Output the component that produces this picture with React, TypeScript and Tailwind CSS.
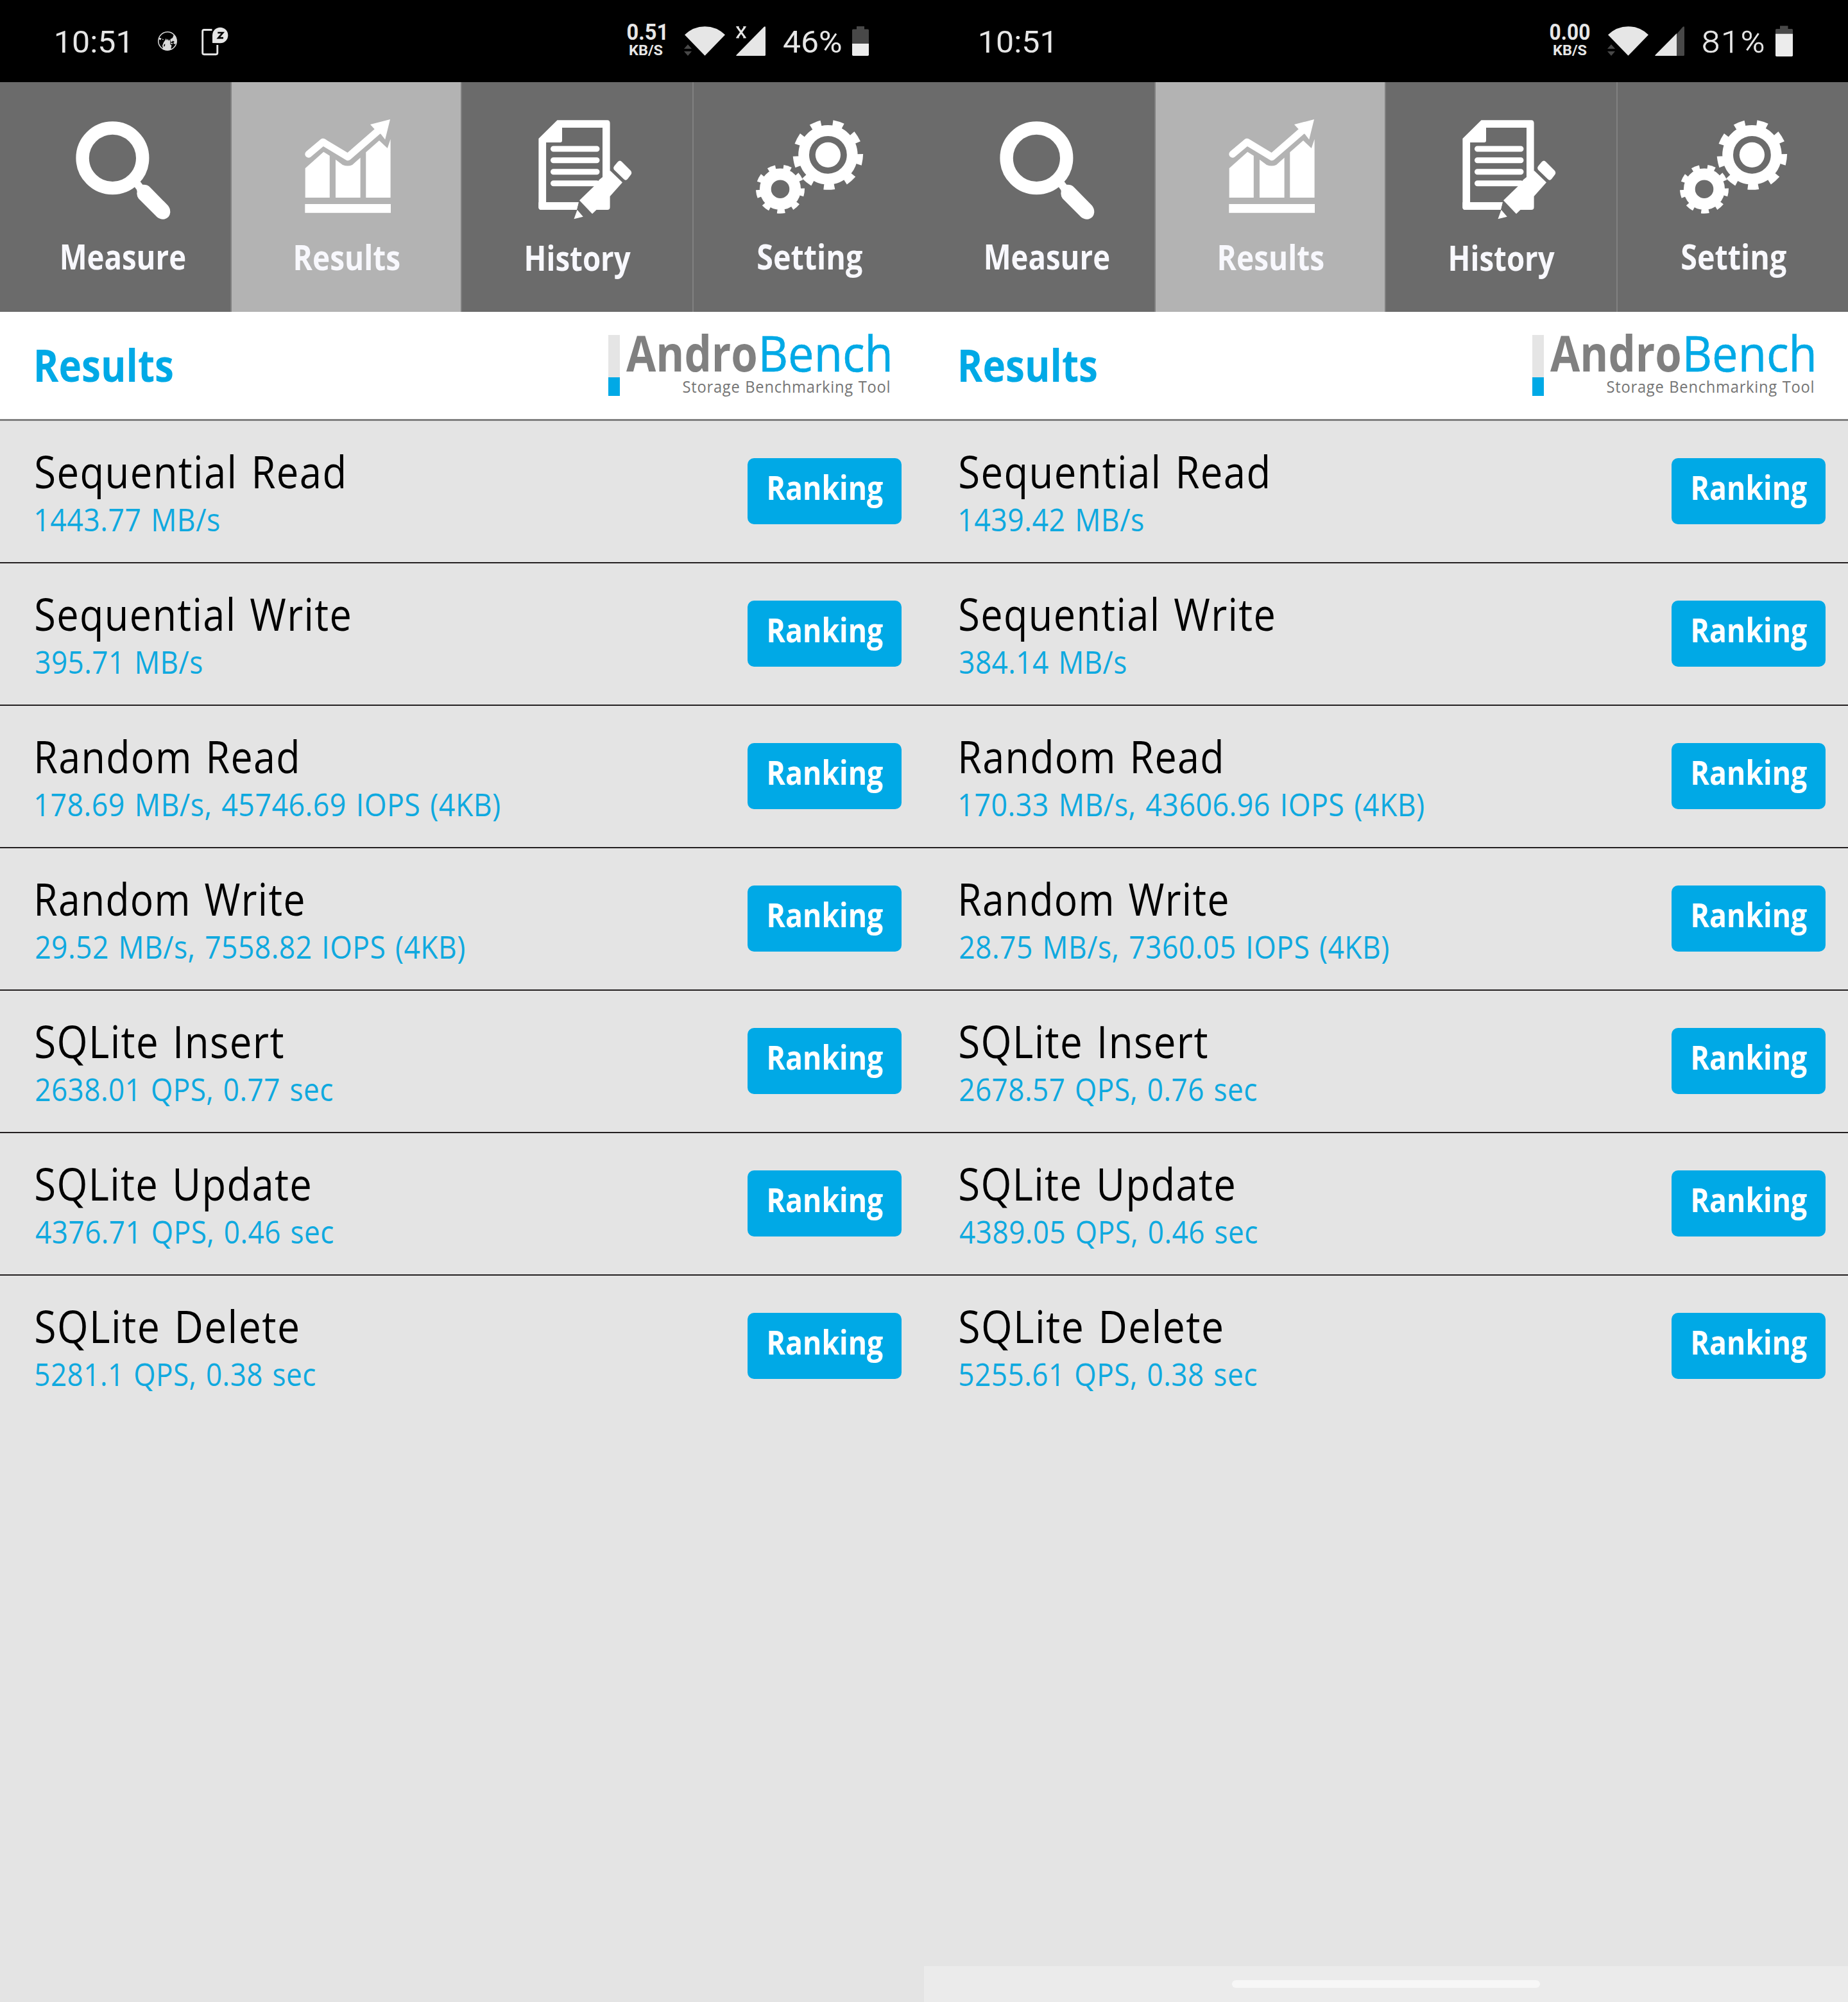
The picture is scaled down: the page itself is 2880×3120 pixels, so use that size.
import { useLayoutEffect, useRef, useState, type ReactNode } from "react";

/* Text whose drawn glyphs span exactly `w` pixels, starting `x` pixels from the box's left edge. */
function Fit({ w, x = 0, className = "", children }: { w: number; x?: number; className?: string; children: string }) {
  const ref = useRef<HTMLSpanElement>(null);
  const [transform, setTransform] = useState("none");
  useLayoutEffect(() => {
    const el = ref.current;
    const ctx = document.createElement("canvas").getContext("2d");
    if (!el || !ctx) return;
    const cs = getComputedStyle(el);
    ctx.font = `${cs.fontWeight} ${cs.fontSize} ${cs.fontFamily}`;
    const m = ctx.measureText(children);
    const letter = parseFloat(cs.letterSpacing) || 0;
    const word = parseFloat(cs.wordSpacing) || 0;
    const extra = letter * (children.length - 1) + word * (children.split(" ").length - 1);
    const s = w / (m.actualBoundingBoxLeft + m.actualBoundingBoxRight + extra);
    setTransform(`translateX(${x + m.actualBoundingBoxLeft * s}px) scaleX(${s})`);
  }, [w, x, children]);
  return (
    <span className={`block shrink-0 ${className}`} style={{ width: w }}>
      <span ref={ref} className="inline-block origin-left whitespace-nowrap align-top" style={{ transform }}>
        {children}
      </span>
    </span>
  );
}

type Phone = {
  leftIcons: boolean;
  rate: string;
  rateW: number;
  battery: string;
  batteryW: number;
  values: [string, number][];
  navBar: boolean;
};

const tests: [string, number, number][] = [
  ["Sequential Read", 479.5, 0],
  ["Sequential Write", 489.5, 0],
  ["Random Read", 405.5, 1.5],
  ["Random Write", 415.5, 1.5],
  ["SQLite Insert", 386, 0],
  ["SQLite Update", 427.5, 0],
  ["SQLite Delete", 408.5, 0],
];

const phones: Phone[] = [
  {
    leftIcons: true,
    rate: "0.51",
    rateW: 59,
    battery: "46%",
    batteryW: 90,
    navBar: false,
    values: [
      ["1443.77 MB/s", 286],
      ["395.71 MB/s", 259],
      ["178.69 MB/s, 45746.69 IOPS (4KB)", 723],
      ["29.52 MB/s, 7558.82 IOPS (4KB)", 668],
      ["2638.01 QPS, 0.77 sec", 462],
      ["4376.71 QPS, 0.46 sec", 463],
      ["5281.1 QPS, 0.38 sec", 435],
    ],
  },
  {
    leftIcons: false,
    rate: "0.00",
    rateW: 62,
    battery: "81%",
    batteryW: 94,
    navBar: true,
    values: [
      ["1439.42 MB/s", 286],
      ["384.14 MB/s", 259],
      ["170.33 MB/s, 43606.96 IOPS (4KB)", 723],
      ["28.75 MB/s, 7360.05 IOPS (4KB)", 668],
      ["2678.57 QPS, 0.76 sec", 462],
      ["4389.05 QPS, 0.46 sec", 463],
      ["5255.61 QPS, 0.38 sec", 462],
    ],
  },
];

function GlobeIcon() {
  return (
    <svg className="mt-[48px] ml-[45.500px] block h-[32px] w-[32px] shrink-0" viewBox="245 48 32 32">
      <circle cx="261" cy="64" r="14.2" fill="none" stroke="#d9d9d9" strokeWidth="1.500" />
      <path
        fill="#d9d9d9"
        d="M254 76 L253 71 L255 66 L257.5 62.5 L258.8 59.8 L260 63 L261.4 60.5 L262.4 63.5 L264 61.5 L265.500 65.5 L265 68.5 L267.500 71 L266.5 75 L267.5 77 Q261 80 254.500 77 Z"
      />
      <path fill="#d9d9d9" d="M265.500 61 L269 59 L271 53.500 L274.500 58 L275.500 63 L275 67.500 L272 69 L270 67 L272 65 L269 63.500 L268 65.500 L265.500 64.500 Z" />
      <path fill="#d9d9d9" d="M247 58.500 L251.500 59.500 L250.500 62.500 L248 61.500 Z M252.500 60.500 l3 .8 l-2 1 Z M266 66.500 l3.500 .8 l-1 1.500 l-3 -.8 Z" />
      <path fill="#000" d="M255.500 69.500 l1.800 -1.300 l-.3 3.500 l-1.800 1 Z" />
    </svg>
  );
}

function PhoneSleepIcon() {
  return (
    <svg className="mt-[40px] ml-[35px] block h-[48px] w-[46px] shrink-0" viewBox="312 40 46 48">
      <path d="M330.500 46.500 H318 Q315.700 46.500 315.700 48.800 V82.300 Q315.700 84.700 318 84.700 H336.500 Q338.800 84.700 338.800 82.300 V70" fill="none" stroke="#e6e6e6" strokeWidth="2.900" />
      <path d="M331 67 V55 A12.200 12.200 0 1 1 343.200 67.200 Z" fill="#e6e6e6" />
      <path d="M339.300 51 H347.200 L340.300 59.200 H348" fill="none" stroke="#000" strokeWidth="2.700" />
    </svg>
  );
}

function WifiIcon() {
  return (
    <svg className="mt-[38px] block h-[52px] w-[68px] shrink-0" viewBox="1064 38 68 52">
      <path d="M1067 54.300 Q1080.500 41.300 1098.500 41.300 Q1116.500 41.300 1130 54.300 L1098.500 86.700 Z" fill="#e6e6e6" />
      <path d="M1072 69.300 L1078 76 H1066 Z M1066 80 H1078 L1072 87 Z" fill="#484848" />
    </svg>
  );
}

function StatusBar({ p }: { p: Phone }) {
  return (
    <div className="flex h-[128px] bg-black font-['Roboto',sans-serif] text-[#e6e6e6]">
      <Fit w={111} className="mt-[42px] ml-[88px] text-[48.500px] leading-[48px]">10:51</Fit>
      {p.leftIcons && (
        <>
          <GlobeIcon />
          <PhoneSleepIcon />
        </>
      )}
      <div className="ml-auto flex w-[464px] shrink-0">
        <div className="mt-[38px] flex w-[62px] shrink-0 flex-col items-center gap-[3px] font-bold">
          <Fit w={p.rateW} x={-0.5} className="text-[35px] leading-[26px]">{p.rate}</Fit>
          <Fit w={51.500} className="text-[22px] leading-[23px]">KB/S</Fit>
        </div>
        {p.leftIcons ? (
          <>
            <div className="ml-[26px]"><WifiIcon /></div>
            <svg className="mt-[38px] ml-[13px] block h-[52px] w-[50px] shrink-0" viewBox="1145 38 50 52">
              <path d="M1149 42 L1161 58.500 M1161 42 L1149 58.500" stroke="#e6e6e6" strokeWidth="3" />
              <path d="M1147.200 41.700 h4.500 M1158.300 41.700 h4.500 M1147.200 58.700 h4.500 M1158.300 58.700 h4.500" stroke="#e6e6e6" strokeWidth="1.600" />
              <path d="M1193 43 V85.500 Q1193 87 1191.500 87 H1148.500 Q1146.500 87 1147.800 85.400 L1190.500 42 Q1193 40 1193 43 Z" fill="#e6e6e6" />
            </svg>
            <Fit w={p.batteryW} className="mt-[42px] ml-[25.500px] text-[48.500px] leading-[48px]">{p.battery}</Fit>
            <svg className="mt-[38px] ml-[16.500px] block h-[52px] w-[30px] shrink-0" viewBox="1327 38 30 52">
              <path d="M1335 41 H1347 V45.500 H1352.500 Q1354 45.500 1354 47 V68 H1328 V47 Q1328 45.500 1329.500 45.500 H1335 Z" fill="#484848" />
              <path d="M1328 68 H1354 V85.300 Q1354 87 1352.300 87 H1329.700 Q1328 87 1328 85.300 Z" fill="#ececec" />
            </svg>
          </>
        ) : (
          <>
            <div className="ml-[25px]"><WifiIcon /></div>
            <svg className="mt-[38px] ml-[6px] block h-[52px] w-[50px] shrink-0" viewBox="1137 38 50 52">
              <path d="M1173 53 L1182.500 42 Q1185 40 1185 43 V85.500 Q1185 87 1183.500 87 H1173 Z" fill="#484848" />
              <path d="M1173 52 V87 H1140.500 Q1138.500 87 1139.800 85.400 Z" fill="#e6e6e6" />
            </svg>
            <Fit w={p.batteryW} className="mt-[42px] ml-[27px] text-[49px] leading-[48px] font-light tracking-[2px] [-webkit-text-stroke:0.6px_#e6e6e6]">{p.battery}</Fit>
            <svg className="mt-[38px] ml-[18px] block h-[52px] w-[30px] shrink-0" viewBox="1326 38 30 52">
              <path d="M1334 40.300 H1346.500 V45 H1352.500 Q1354 45 1354 46.500 V53 H1327 V46.500 Q1327 45 1328.500 45 H1334 Z" fill="#484848" />
              <path d="M1327 52.700 H1354 V86.300 Q1354 88 1352.300 88 H1328.700 Q1327 88 1327 86.300 Z" fill="#ececec" />
            </svg>
          </>
        )}
      </div>
    </div>
  );
}

function MeasureIcon() {
  return (
    <svg className="block h-[241px] w-[359px]" viewBox="0 0 359 241">
      <circle cx="175.400" cy="118.300" r="46.800" fill="none" stroke="#fff" strokeWidth="20.400" />
      <path d="M211 155 L224 172" stroke="#fff" strokeWidth="12" />
      <path
        d="M216 161.500 Q222 158.500 229 160.500 Q232 161.500 234.500 164.500 L261.500 192 Q265.500 196.500 265.300 203 Q264.500 211 256.500 213.500 Q249.500 214.300 245 210.500 L216 181.500 Q213.500 178.500 213.300 173.500 Q214.500 168 211.500 164.500 Z"
        fill="#fff"
      />
    </svg>
  );
}

function ResultsIcon() {
  return (
    <svg className="block h-[242px] w-[357px]" viewBox="361 0 357 242">
      <g fill="#fff">
        <path d="M475.700 134.300 L504.200 108.700 L513.800 114.700 V180 H475.700 Z" />
        <path d="M523 120.700 L534 129 Q542 132 549 129 L561.600 117.700 V180 H523 Z" />
        <path d="M570.300 109.300 L591 91 L603.800 103 L608.600 88.700 V180 H570.300 Z" />
        <path d="M475.300 190 H609 V203.700 H475.300 Z" />
        <path d="M608 58 L577 66 L583 72.500 L594 81.500 L600.200 89.500 Z" />
      </g>
      <path d="M480.800 112.300 L503.400 93.300 L542.300 116.700 L589 76" fill="none" stroke="#fff" strokeWidth="11" strokeLinecap="round" strokeLinejoin="round" />
    </svg>
  );
}

function HistoryIcon() {
  return (
    <svg className="block h-[243px] w-[359px]" viewBox="720 0 359 243">
      <g fill="#fff">
        <path
          fillRule="evenodd"
          d="M839.400 88 L868.500 59.300 H946.500 Q950.600 59.300 950.600 64 V195 Q950.600 199 946.500 199 H898.800 L901.600 187.300 H851.100 V94 H873 Q876 94 876 91 V71 H939 V150 H950.600 V195 Q950.600 199 946.500 199 H843.500 Q839.400 199 839.400 195 Z"
        />
        <path d="M951 138 L970 156.300 L950.600 178 V195 Q950.600 199 946.500 199 H929.500 L923 205.300 L903 184.300 L925 163 L934 152 L939 148 Z" />
        <path d="M899.600 199 L908.800 209.700 L894.500 213.300 Z" />
        <path d="M962.500 124.500 Q966 120.500 969.500 124.500 L983 138 Q985.500 141.500 983 144.500 L978 151 Q975 154.500 972 151 L957 136.500 Q955 133.500 957.500 130.500 Z" />
      </g>
      <path d="M862.500 104 H930 M862.500 121.700 H930 M862.500 139.700 H930 M862.500 157.700 H930" stroke="#fff" strokeWidth="9" strokeLinecap="round" />
      <path d="M852 175 H901 V187 H852 Z" fill="#6b6b6b" />
      <path d="M839.400 187.300 H901.800 L898.800 199 H843.500 Q839.400 199 839.400 195 Z" fill="#fff" />
    </svg>
  );
}

const teeth = [88, 128, 168, 208, 248, 288, 328, 8, 48];

function SettingIcon() {
  return (
    <svg className="block h-[241px] w-[359px]" viewBox="1081 0 359 241">
      <circle cx="1290.400" cy="113.300" r="37.800" fill="none" stroke="#fff" strokeWidth="16.800" />
      <circle cx="1290.400" cy="113.300" r="19.600" fill="#fff" />
      {teeth.map((a) => (
        <path key={a} d="M42 -7 L54 -9 Q55 0 54 9 L42 7 Z" fill="#fff" transform={`translate(1290.4 113.3) rotate(${a})`} />
      ))}
      <circle cx="1216" cy="166.700" r="23.200" fill="none" stroke="#fff" strokeWidth="17.800" />
      {teeth.map((a) => (
        <path key={a} d="M29 -5 L37.500 -6.500 Q38.500 0 37.500 6.500 L29 5 Z" fill="#fff" transform={`translate(1216 166.700) rotate(${a})`} />
      ))}
    </svg>
  );
}

function Tab({ className, icon, label, w }: { className: string; icon: ReactNode; label: string; w: number }) {
  return (
    <div className={`h-[358px] shrink-0 ${className}`}>
      {icon}
      <Fit w={w} className="text-[54px] leading-[60px] font-bold text-[#f8f8fd]">{label}</Fit>
    </div>
  );
}

function Logo() {
  return (
    <div className="flex w-[438px]">
      <div className="mt-[36px] h-[95px] w-[17.500px] shrink-0 bg-[#e5e5e5] pt-[66px]">
        <div className="h-[29px] bg-[#00a9e6]" />
      </div>
      <div className="mt-[32px] ml-[10.500px] flex flex-col">
        <div className="flex gap-[9px] text-[77px] leading-[64px]">
          <Fit w={202.500} className="font-bold text-[#808080]">Andro</Fit>
          <Fit w={198} className="text-[#00a9e6] [-webkit-text-stroke:0.6px_#00a9e6]">Bench</Fit>
        </div>
        <Fit w={321.500} x={-0.5} className="mt-[6px] ml-[88.500px] text-[26px] leading-[28px] tracking-[0.8px] [word-spacing:1px] text-[#757575]">Storage Benchmarking Tool</Fit>
      </div>
    </div>
  );
}

function Screen({ p }: { p: Phone }) {
  return (
    <div className="flex h-[3120px] w-[1440px] shrink-0 flex-col overflow-hidden bg-[#e4e4e4]">
      <StatusBar p={p} />
      <div className="flex bg-[#6b6b6b]">
        <Tab className="w-[361px] border-r-2 border-[#808080] [&>span]:ml-[96px]" icon={<MeasureIcon />} label="Measure" w={192.5} />
        <Tab className="w-[359px] border-r-2 border-[#808080] bg-[#b3b3b3] [&>span]:ml-[99px]" icon={<ResultsIcon />} label="Results" w={162.500} />
        <Tab className="w-[361px] border-r-2 border-[#808080] [&>span]:ml-[100px]" icon={<HistoryIcon />} label="History" w={163} />
        <Tab className="w-[359px] [&>span]:ml-[100px]" icon={<SettingIcon />} label="Setting" w={163} />
      </div>
      <div className="flex h-[170px] shrink-0 justify-between border-b-3 border-[#808080] bg-white pr-[54px] pl-[56px]">
        <Fit w={212} x={1} className="mt-[47px] text-[69px] leading-[70px] font-bold text-[#00a9e6]">Results</Fit>
        <Logo />
      </div>
      {tests.map(([name, w, x], i) => (
        <div
          key={name}
          className="flex h-[222px] shrink-0 items-start justify-between border-b-2 border-[#231f20] pr-[35px] pl-[56px] last-of-type:border-transparent"
        >
          <div className="flex flex-col gap-[15px] pt-[43px]">
            <Fit w={w} x={x} className="text-[69px] leading-[70px] tracking-[1.5px] [word-spacing:4px] text-black">{name}</Fit>
            <Fit w={p.values[i][1]} className="text-[49px] leading-[50px] tracking-[0.5px] [word-spacing:3px] text-[#0fa9df]">{p.values[i][0]}</Fit>
          </div>
          <button className="mt-[58px] flex h-[103px] w-[240px] items-start rounded-[10px] bg-[#00a9e6] pt-[19px] pl-[32.500px]">
            <Fit w={178} className="text-left text-[52px] leading-[52px] font-bold text-white">Ranking</Fit>
          </button>
        </div>
      ))}
      {p.navBar && (
        <footer className="mt-auto flex h-[56px] justify-center bg-[#ebebeb] pt-[22px]">
          <span className="block h-[12px] w-[480px] rounded-full bg-[#f7f7f7]" />
        </footer>
      )}
    </div>
  );
}

export default function App() {
  return (
    <div className="flex w-[2880px] font-['Open_Sans',sans-serif]">
      {phones.map((p) => (
        <Screen key={p.rate} p={p} />
      ))}
    </div>
  );
}
